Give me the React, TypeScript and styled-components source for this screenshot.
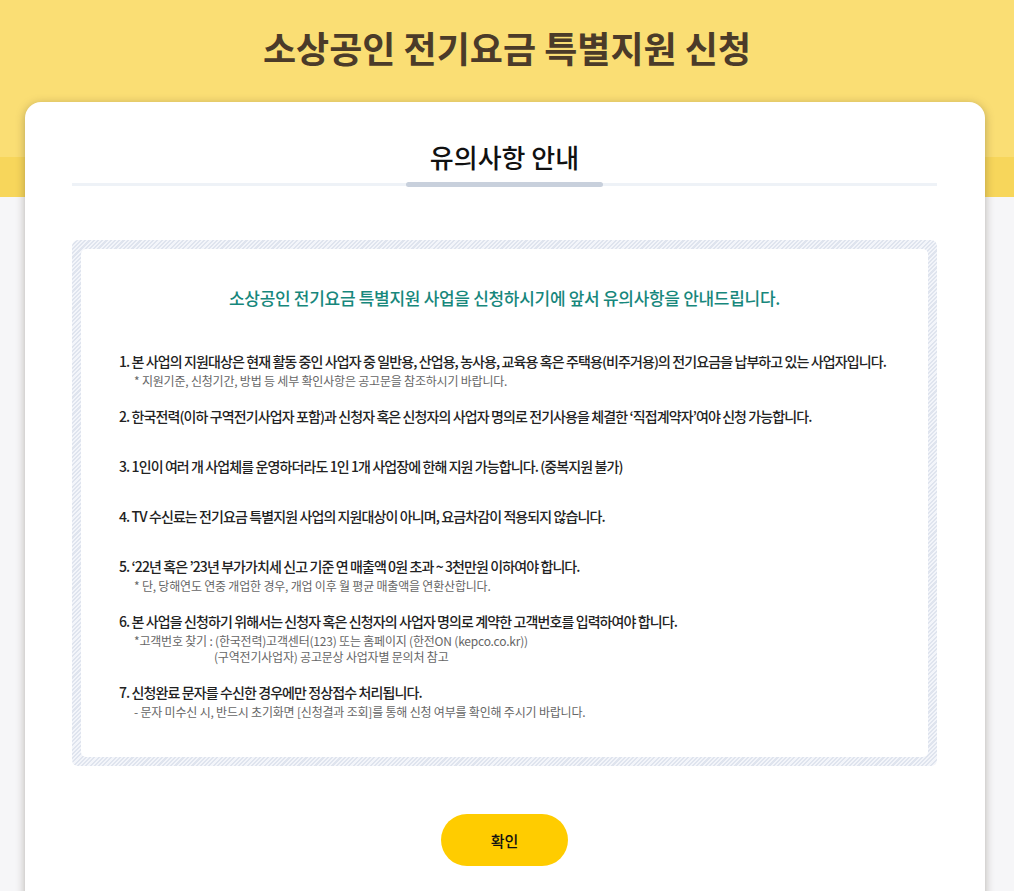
import React from "react";
import styled, { createGlobalStyle } from "styled-components";

const GlobalStyle = createGlobalStyle`
  html, body {
    margin: 0;
    padding: 0;
    background: #f6f6f8;
  }
  body {
    font-family: "Noto Sans CJK KR", "Noto Sans", sans-serif;
    color: #222;
  }
  * {
    box-sizing: border-box;
  }
`;

const Page = styled.div`
  min-height: 891px;
  overflow: hidden;
`;

const Header = styled.header`
  height: 197px;
  padding-top: 23px;
  background: linear-gradient(
    to bottom,
    #fade74 0,
    #fade74 157px,
    #f7d65b 157px,
    #f7d65b 197px
  );
  text-align: center;
`;

const PageTitle = styled.h1`
  margin: 0;
  font-size: 36px;
  line-height: 48px;
  font-weight: 700;
  letter-spacing: 0;
  color: #4b3b29;
`;

const Card = styled.main`
  width: 960px;
  margin: -95px 0 0 25px;
  padding: 37px 48px 60px 47px;
  background: #fff;
  border-radius: 16px;
  box-shadow: 0 2px 10px rgba(60, 50, 30, 0.35);
`;

const CardTitle = styled.h2`
  margin: 0;
  text-align: center;
  font-size: 26px;
  line-height: 36px;
  font-weight: 500;
  letter-spacing: 0;
  color: #111;
`;

const Divider = styled.div`
  display: flex;
  justify-content: center;
  height: 5px;
  margin-top: 7px;
  background: linear-gradient(
    to bottom,
    transparent 1px,
    #eef2f7 1px,
    #eef2f7 4px,
    transparent 4px
  );
`;

const Pill = styled.span`
  width: 197px;
  height: 5px;
  border-radius: 3px;
  background: #c8d0dc;
`;

const NoticeFrame = styled.section`
  margin-top: 53px;
  padding: 9px;
  border-radius: 6px;
  background: repeating-linear-gradient(
    135deg,
    #dfe4ee 0,
    #dfe4ee 1.5px,
    #f3f5fa 1.5px,
    #f3f5fa 3px
  );
`;

const NoticeBody = styled.div`
  padding: 37px 38px;
  background: #fff;
  border-radius: 5px;
`;

const Lead = styled.p`
  margin: 0 0 41px;
  text-align: center;
  font-size: 17px;
  line-height: 24px;
  letter-spacing: -0.3px;
  color: #17877c;
  font-weight: 500;
`;

const List = styled.ol`
  list-style: none;
  margin: 0;
  padding: 0;
  display: flex;
  flex-direction: column;
  gap: 17px;
`;

const Item = styled.li`
  min-height: 33px;
`;

const ItemText = styled.p`
  margin: 0;
  font-size: 14px;
  line-height: 20px;
  letter-spacing: -0.9px;
  color: #222;
  font-weight: 500;
  white-space: nowrap;
`;

const Note = styled.p`
  margin: 2px 0 0;
  padding-left: 15px;
  font-size: 12px;
  line-height: 16px;
  letter-spacing: -0.2px;
  color: #666;
  white-space: nowrap;
`;

const NoteLine = styled.span<{ $offset?: number }>`
  display: block;
  padding-left: ${(p) => p.$offset ?? 0}px;
`;

const Actions = styled.div`
  display: flex;
  justify-content: center;
  margin-top: 48px;
`;

const ConfirmButton = styled.button`
  width: 127px;
  height: 52px;
  border: 0;
  border-radius: 26px;
  background: #ffcc00;
  font-family: inherit;
  font-size: 15px;
  font-weight: 500;
  color: #111;
  cursor: pointer;
`;

type Notice = {
  text: string;
  notes?: string[];
};

const notices: Notice[] = [
  {
    text: "1. 본 사업의 지원대상은 현재 활동 중인 사업자 중 일반용, 산업용, 농사용, 교육용 혹은 주택용(비주거용)의 전기요금을 납부하고 있는 사업자입니다.",
    notes: ["* 지원기준, 신청기간, 방법 등 세부 확인사항은 공고문을 참조하시기 바랍니다."],
  },
  {
    text: "2. 한국전력(이하 구역전기사업자 포함)과 신청자 혹은 신청자의 사업자 명의로 전기사용을 체결한 ‘직접계약자’여야 신청 가능합니다.",
  },
  {
    text: "3. 1인이 여러 개 사업체를 운영하더라도 1인 1개 사업장에 한해 지원 가능합니다. (중복지원 불가)",
  },
  {
    text: "4. TV 수신료는 전기요금 특별지원 사업의 지원대상이 아니며, 요금차감이 적용되지 않습니다.",
  },
  {
    text: "5. ‘22년 혹은 ’23년 부가가치세 신고 기준 연 매출액 0원 초과 ~ 3천만원 이하여야 합니다.",
    notes: ["* 단, 당해연도 연중 개업한 경우, 개업 이후 월 평균 매출액을 연환산합니다."],
  },
  {
    text: "6. 본 사업을 신청하기 위해서는 신청자 혹은 신청자의 사업자 명의로 계약한 고객번호를 입력하여야 합니다.",
    notes: [
      "*고객번호 찾기 : (한국전력)고객센터(123) 또는 홈페이지 (한전ON (kepco.co.kr))",
      "(구역전기사업자) 공고문상 사업자별 문의처 참고",
    ],
  },
  {
    text: "7. 신청완료 문자를 수신한 경우에만 정상접수 처리됩니다.",
    notes: ["- 문자 미수신 시, 반드시 초기화면 [신청결과 조회]를 통해 신청 여부를 확인해 주시기 바랍니다."],
  },
];

export default function App() {
  return (
    <Page>
      <GlobalStyle />
      <Header>
        <PageTitle>소상공인 전기요금 특별지원 신청</PageTitle>
      </Header>
      <Card>
        <CardTitle>유의사항 안내</CardTitle>
        <Divider>
          <Pill />
        </Divider>
        <NoticeFrame>
          <NoticeBody>
            <Lead>
              소상공인 전기요금 특별지원 사업을 신청하시기에 앞서 유의사항을
              안내드립니다.
            </Lead>
            <List>
              {notices.map((n, i) => (
                <Item key={i}>
                  <ItemText>{n.text}</ItemText>
                  {n.notes && (
                    <Note>
                      {n.notes.map((line, j) => (
                        <NoteLine key={j} $offset={j === 0 ? 0 : 80}>
                          {line}
                        </NoteLine>
                      ))}
                    </Note>
                  )}
                </Item>
              ))}
            </List>
          </NoticeBody>
        </NoticeFrame>
        <Actions>
          <ConfirmButton type="button">확인</ConfirmButton>
        </Actions>
      </Card>
    </Page>
  );
}
